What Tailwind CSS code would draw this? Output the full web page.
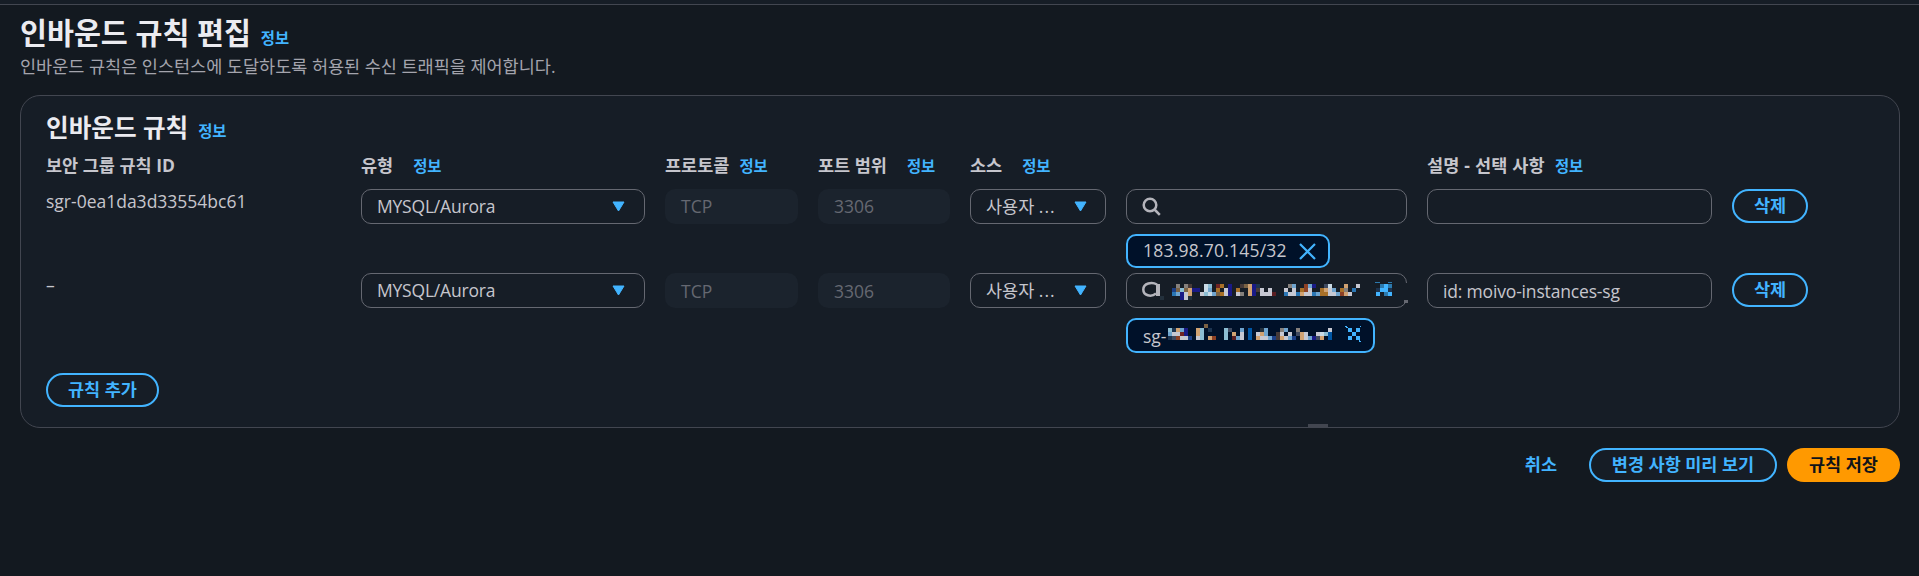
<!DOCTYPE html>
<html lang="ko">
  <head>
    <meta charset="UTF-8" />
    <meta name="viewport" content="width=device-width, initial-scale=1.0" />
    <title>인바운드 규칙 편집</title>
    <script src="https://cdn.jsdelivr.net/npm/@tailwindcss/browser@4"></script>
  </head>
  <body class="h-[576px] overflow-hidden bg-[#131920] font-['Open_Sans','Noto_Sans_CJK_KR',sans-serif] text-[17.5px] leading-[24px] text-[#c6c6cd]">
    <div class="h-[5px] border-b border-[#424650] bg-[#161d26]"></div>

    <main class="pl-5 pr-[19px]">
      <header class="h-[90px] pt-2">
        <div class="flex items-baseline gap-2.5 h-[41px]">
          <h1 class="text-[29.3px] leading-[40px] font-bold text-[#ebebf0]">인바운드 규칙 편집</h1>
          <a href="#" class="text-[15.4px] font-bold text-[#42b4ff]">정보</a>
        </div>
        <p class="text-[#a4a4ad]">인바운드 규칙은 인스턴스에 도달하도록 허용된 수신 트래픽을 제어합니다.</p>
      </header>

      <section class="relative h-[333px] rounded-[20px] border border-[#424650] bg-[#161d26] px-[25px] pt-[14px]">
        <div class="flex items-baseline gap-2.5 h-[43px]">
          <h2 class="text-[24.6px] leading-[36px] font-bold text-[#ebebf0]">인바운드 규칙</h2>
          <a href="#" class="text-[15.4px] font-bold text-[#42b4ff]">정보</a>
        </div>

        <div class="grid grid-cols-[295px_284px_133px_132px_136px_281px_285px_76px] gap-x-5 h-[36px] font-bold whitespace-nowrap">
          <div>보안 그룹 규칙 ID</div>
          <div class="flex items-baseline gap-5">유형 <a href="#" class="text-[15.4px] text-[#42b4ff]">정보</a></div>
          <div class="flex items-baseline gap-2.5">프로토콜 <a href="#" class="text-[15.4px] text-[#42b4ff]">정보</a></div>
          <div class="flex items-baseline gap-5">포트 범위 <a href="#" class="text-[15.4px] text-[#42b4ff]">정보</a></div>
          <div class="flex items-baseline gap-5">소스 <a href="#" class="text-[15.4px] text-[#42b4ff]">정보</a></div>
          <div></div>
          <div class="flex items-baseline gap-2.5"><span class="tracking-[0.2px]">설명 - 선택 사항</span> <a href="#" class="text-[15.4px] text-[#42b4ff]">정보</a></div>
        </div>

        <div class="grid grid-cols-[295px_284px_133px_132px_136px_281px_285px_76px] gap-x-5 h-[84px] items-start">
          <div>sgr-0ea1da3d33554bc61</div>
          <button class="flex h-[35px] items-center justify-between rounded-[10px] border border-[#656871] pl-[15px] pr-[19px]">
            <span class="pb-0.5 tracking-[-0.2px]">MYSQL/Aurora</span>
            <svg width="13" height="11" viewBox="0 0 13 11"><path d="M1 1h11L6.5 10z" fill="#42b4ff" stroke="#42b4ff" stroke-linejoin="round" /></svg>
          </button>
          <div class="flex h-[35px] items-center rounded-[10px] bg-[#1b232d] px-4 pb-0.5 text-[#656871]">TCP</div>
          <div class="flex h-[35px] items-center rounded-[10px] bg-[#1b232d] px-4 pb-0.5 text-[#656871]">3306</div>
          <button class="flex h-[35px] items-center justify-between rounded-[10px] border border-[#656871] pl-[15px] pr-[18px]">
            <span class="pb-0.5">사용자 <span class="tracking-[1px]">...</span></span>
            <svg width="13" height="11" viewBox="0 0 13 11"><path d="M1 1h11L6.5 10z" fill="#42b4ff" stroke="#42b4ff" stroke-linejoin="round" /></svg>
          </button>
          <div>
            <div class="flex h-[35px] items-center rounded-[10px] border border-[#656871] pl-[15px]">
              <svg width="19" height="19" viewBox="0 0 19 19" fill="none" stroke="#b4b4bb" stroke-width="2.5"><circle cx="8" cy="8" r="6.3" /><path d="M12.5 12.5l5.3 5.3" /></svg>
            </div>
            <div class="mt-[10px] flex h-[34px] w-[204px] items-center justify-between rounded-[10px] border-2 border-[#42b4ff] bg-[#001129] pl-[15px] pr-[12px]">
              <span class="pb-0.5 tracking-[0.22px]">183.98.70.145/32</span>
              <svg width="17" height="17" viewBox="0 0 17 17" fill="none" stroke="#42b4ff" stroke-width="2.2"><path d="M1 1l15 15M16 1L1 16" /></svg>
            </div>
          </div>
          <div class="h-[35px] rounded-[10px] border border-[#656871]"></div>
          <button class="flex h-[34px] items-center justify-center rounded-full border-2 border-[#42b4ff] pb-0.5 font-bold text-[#42b4ff]">삭제</button>
        </div>

        <div class="grid grid-cols-[295px_284px_133px_132px_136px_281px_285px_76px] gap-x-5 h-[100px] items-start">
          <div>–</div>
          <button class="flex h-[35px] items-center justify-between rounded-[10px] border border-[#656871] pl-[15px] pr-[19px]">
            <span class="pb-0.5 tracking-[-0.2px]">MYSQL/Aurora</span>
            <svg width="13" height="11" viewBox="0 0 13 11"><path d="M1 1h11L6.5 10z" fill="#42b4ff" stroke="#42b4ff" stroke-linejoin="round" /></svg>
          </button>
          <div class="flex h-[35px] items-center rounded-[10px] bg-[#1b232d] px-4 text-[#656871]">TCP</div>
          <div class="flex h-[35px] items-center rounded-[10px] bg-[#1b232d] px-4 text-[#656871]">3306</div>
          <button class="flex h-[35px] items-center justify-between rounded-[10px] border border-[#656871] pl-[15px] pr-[18px]">
            <span class="pb-0.5">사용자 <span class="tracking-[1px]">...</span></span>
            <svg width="13" height="11" viewBox="0 0 13 11"><path d="M1 1h11L6.5 10z" fill="#42b4ff" stroke="#42b4ff" stroke-linejoin="round" /></svg>
          </button>
          <div>
            <div class="relative h-[35px] rounded-[10px] border border-[#656871]">
              <svg id="masked-search" class="absolute -left-px -top-px" width="284" height="35" viewBox="0 0 284 35" shape-rendering="crispEdges">
                <path d="M31 11.5C26 8.5 17.3 10 17.3 16.5C17.3 22.5 25 24.5 30 20.5" fill="none" stroke="#b4b4bb" stroke-width="2.5" shape-rendering="auto" />
                <path d="M30 11h4v12h-4z" fill="#b4b4bb" />
                <path d="M34 23h4v4h-4z" fill="#23303c" />
                <path d="M278 10h6v17h-6z" fill="#161d26" />
                <path d="M278 27h4v3h-4z" fill="#656871" />
                <path d="M249 9h5v1h-5zM262 9h4v1h-4z" fill="#2c79ad" />
              </svg>
            </div>
            <div class="relative mt-[10px] flex h-[35px] w-[249px] items-center rounded-[10px] border-2 border-[#42b4ff] bg-[#001129] pl-[15px]">
              <span>sg-</span>
              <svg id="masked-token" class="absolute -left-0.5 -top-0.5" width="249" height="35" viewBox="0 0 249 35" shape-rendering="crispEdges">
                <path d="M219 8h2v1h1v1h-2v-1h-1zM234 8h1v1h-1zM233 22h1v1h1v1h-2z" fill="#42b4ff" />
              </svg>
            </div>
          </div>
          <div class="flex h-[35px] items-center rounded-[10px] border border-[#656871] px-[15px] tracking-[-0.17px]">id: moivo-instances-sg</div>
          <button class="flex h-[34px] items-center justify-center rounded-full border-2 border-[#42b4ff] pb-0.5 font-bold text-[#42b4ff]">삭제</button>
        </div>

        <button class="flex h-[34px] w-[113px] items-center justify-center rounded-full border-2 border-[#42b4ff] pb-0.5 font-bold text-[#42b4ff]">규칙 추가</button>
        <div class="absolute bottom-0 left-[1287px] h-[3px] w-5 bg-[#424650]"></div>
      </section>

      <footer class="mt-5 flex h-[34px] justify-end gap-2.5 font-bold">
        <button class="mr-[22px] pb-0.5 text-[#42b4ff]">취소</button>
        <button class="w-[188px] rounded-full border-2 border-[#42b4ff] bg-[#161d26] pb-0.5 text-[#42b4ff]">변경 사항 미리 보기</button>
        <button class="w-[113px] rounded-full bg-[#ff9900] pb-0.5 text-[#0f141a]">규칙 저장</button>
      </footer>
    </main>

    <script>
      const palette = {
        a: "#23303c", b: "#1c3f86", c: "#85807c", d: "#7a6244", e: "#8cbdd2", f: "#d0a272",
        g: "#191a86", h: "#c6c8d2", i: "#6fa4ce", j: "#702424", k: "#a87028", l: "#463a38",
        m: "#3f4a60", n: "#2a76b4", o: "#8c4024", p: "#c9dbe6", q: "#5a1e22", r: "#0056a4",
        s: "#42b4ff", t: "#2c79ad", u: "#1c3450",
      };

      // one character per 4px cell, "." is left empty
      function drawCells(id, left, top, rows) {
        const svg = document.getElementById(id);
        rows.forEach((row, y) => {
          [...row].forEach((key, x) => {
            if (!palette[key]) return;
            const rect = document.createElementNS("http://www.w3.org/2000/svg", "rect");
            rect.setAttribute("x", left + x * 4);
            rect.setAttribute("y", top + y * 4);
            rect.setAttribute("width", 4);
            rect.setAttribute("height", 4);
            rect.setAttribute("fill", palette[key]);
            svg.appendChild(rect);
          });
        });
      }

      drawCells("masked-search", 46, 11, [
        ".c.cl...pe.jk.g..ldfgu.......ci..oig..mp...f..h",
        "bdedfgg.pi.k.hg.k..fglh.h...h.h.koh..kfhi.kc.n.",
        "nighf..hepidkhg.hc.fg.hhhq..nhhnfhhnikkhhiofh..",
        "..gha",
      ]);
      drawCells("masked-search", 250, 11, [".tst", "ussu", "s.ts"]);

      drawCells("masked-token", 42, 6, [
        ".........d",
        "eufig..fe.u...em..i.r..ai...ci..c.......h",
        "ihhjg..fe.....e.f.h.r.hfi..lh.h.mfh..hper",
        "umohhb.he.fo..e.qih.r.fhhiblfhib.fhigmf.r",
      ]);
      drawCells("masked-token", 222, 10, ["s.s", ".s.", "s.s"]);
    </script>
  </body>
</html>
